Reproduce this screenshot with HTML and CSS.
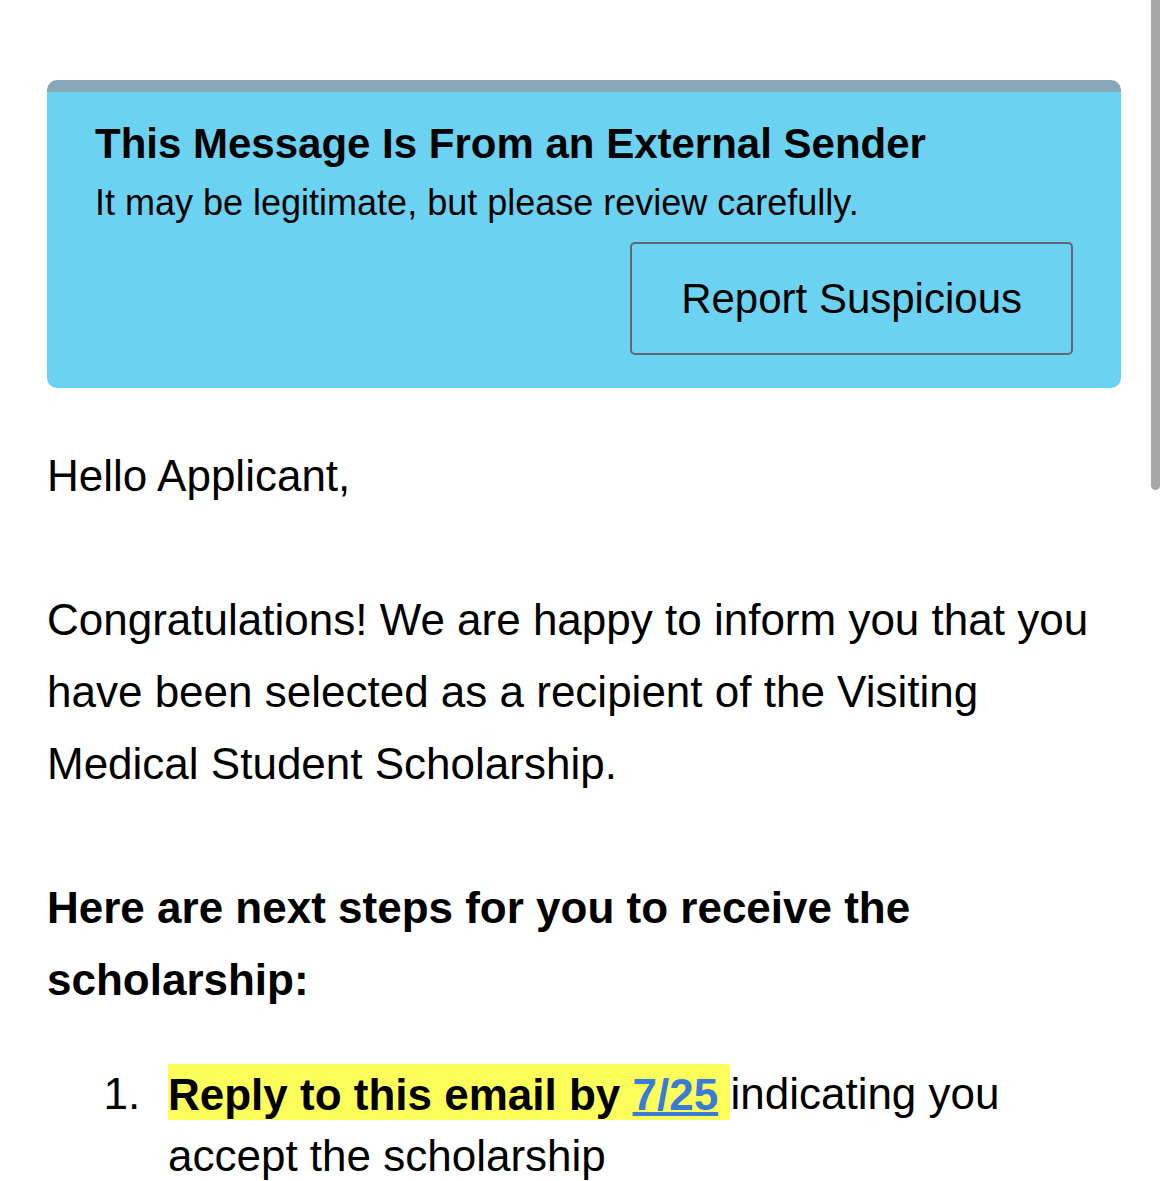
FILE: index.html
```html
<!DOCTYPE html>
<html lang="en">
<head>
<meta charset="utf-8">
<title>External Sender</title>
<link rel="stylesheet" href="styles.css">
</head>
<body>
<div class="page">
  <div class="banner">
    <div class="banner-title">This Message Is From an External Sender</div>
    <div class="banner-sub">It may be legitimate, but please review carefully.</div>
    <div class="banner-actions"><span class="report-btn">Report Suspicious</span></div>
  </div>
  <div class="message">
    <p class="para">Hello Applicant,</p>
    <p class="para">Congratulations! We are happy to inform you that you have been selected as a recipient of the Visiting Medical Student Scholarship.</p>
    <p class="para para-strong">Here are next steps for you to receive the scholarship:</p>
    <ol class="steps">
      <li class="step"><span class="step-num">1.</span><span class="step-text"><strong class="hl">Reply to this email by <a class="date-link" href="#">7/25</a> </strong>indicating you accept the scholarship</span></li>
    </ol>
  </div>
</div>
<div class="scroll-indicator"></div>
</body>
</html>
```
FILE: styles.css
```css
html, body {
  margin: 0;
  padding: 0;
  background: #ffffff;
}

body {
  font-family: "Liberation Sans", Arial, Helvetica, sans-serif;
  color: #000000;
  overflow: hidden;
}

.page {
  width: 1074px;
  padding: 80px 0 0 47px;
}

.banner {
  background: #6bd2f1;
  border-top: 12px solid #86a8b8;
  border-radius: 10px;
  padding: 28px 48px 33px 48px;
}

.banner-title {
  font-size: 42px;
  line-height: 48px;
  font-weight: bold;
}

.banner-sub {
  margin-top: 14px;
  font-size: 36px;
  line-height: 42px;
}

.banner-actions {
  display: flex;
  justify-content: flex-end;
  margin-top: 18px;
}

.report-btn {
  display: inline-block;
  font-size: 42px;
  line-height: 48px;
  padding: 30.5px 49px;
  border: 2px solid #5d6870;
  border-radius: 5px;
}

.message {
  margin-top: 51.5px;
  font-size: 44px;
  line-height: 72px;
}

.para {
  margin: 0 0 72px 0;
}

.para-strong {
  font-weight: bold;
  margin-bottom: 0;
}

.steps {
  list-style: none;
  margin: 47.5px 0 0 0;
  padding: 0;
  line-height: 62px;
}

.step {
  display: grid;
  grid-template-columns: 121px 1fr;
}

.step-num {
  padding-left: 56.5px;
}

.hl {
  background: #ffff5c;
  padding: 5.5px 0 1.5px 0;
}

.date-link {
  color: #3a7bd6;
  text-decoration: underline;
}

.scroll-indicator {
  position: fixed;
  top: 0;
  right: 9px;
  width: 9px;
  height: 490px;
  background: #a7a7a7;
  border-radius: 0 0 5px 5px;
}
```
